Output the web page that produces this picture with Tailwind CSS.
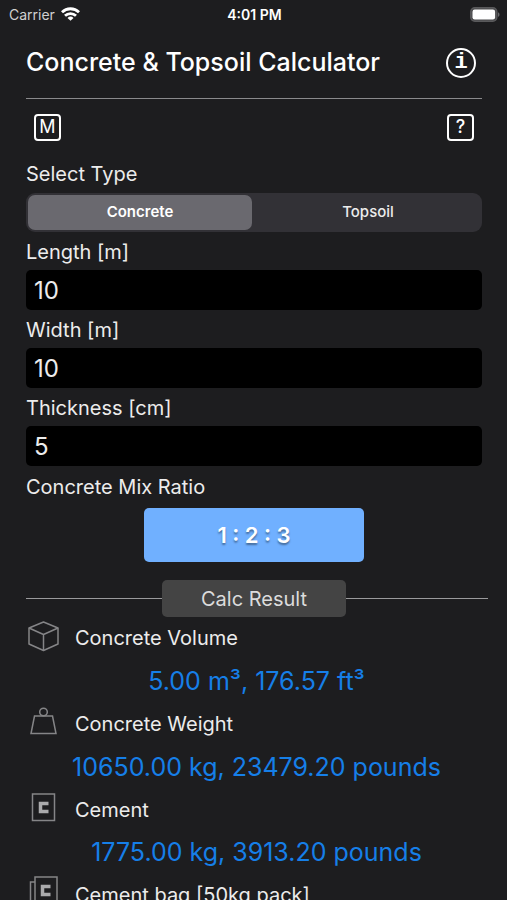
<!DOCTYPE html>
<html lang="en">
<head>
    <meta charset="UTF-8">
    <meta name="viewport" content="width=device-width, initial-scale=1.0">
    <title>Concrete &amp; Topsoil Calculator</title>
    <script src="https://cdn.jsdelivr.net/npm/@tailwindcss/browser@4"></script>
</head>
<body class="h-screen flex flex-col bg-[#1d1d1f] text-[#ececec] font-['Inter','Liberation_Sans',sans-serif]">
    <!-- Status bar -->
    <div class="grid grid-cols-3 items-center h-7 shrink-0 pl-[9px] pr-[7px] text-[14px]">
        <div class="flex items-center gap-[6px]">
            <span class="text-[#d0d0d0]">Carrier</span>
            <svg class="w-[19px] h-[14px]" viewBox="0 0 19 14" fill="none" stroke="#fff" stroke-width="2.8" aria-hidden="true">
                <path d="M1 5.200a12.200 12.200 0 0 1 17 0"/>
                <path d="M4 8.800a7.900 7.900 0 0 1 11 0"/>
                <path d="M9.500 13.800l-3-2.800a4.300 4.300 0 0 1 6 0z" fill="#fff" stroke="none"/>
            </svg>
        </div>
        <div class="text-center font-semibold text-white">4:01 PM</div>
        <svg class="justify-self-end w-[30px] h-[15px]" viewBox="0 0 30 15" aria-hidden="true">
            <rect x=".8" y=".8" width="26" height="13.400" rx="4" fill="#4a4a4c" stroke="#59595b" stroke-width="1.500"/>
            <rect x="2.500" y="2.500" width="22.600" height="10" rx="2.200" fill="#fff"/>
            <path d="M28 5.200c2 .8 2 3.800 0 4.600z" fill="#69696b"/>
        </svg>
    </div>

    <main class="flex-1 min-h-0 overflow-y-auto [scrollbar-width:none] pl-[26px] pr-[25px]">
        <header class="flex items-center justify-between h-[70px] pr-[6px]">
            <h1 class="text-[25px] font-medium text-white whitespace-nowrap">Concrete &amp; Topsoil Calculator</h1>
            <button type="button" aria-label="Info" class="flex items-center justify-center size-[30px] rounded-full border-2 border-white text-white font-['Liberation_Mono',monospace] text-[22px] leading-none font-bold">i</button>
        </header>
        <hr class="border-[#8a8a8c]">

        <div class="flex items-center justify-between h-14 px-2">
            <button type="button" aria-label="Metric units" class="flex items-center justify-center size-[27px] rounded border-2 border-white text-white text-lg leading-none">M</button>
            <button type="button" aria-label="Help" class="flex items-center justify-center size-[27px] rounded border-2 border-white text-white text-lg leading-none font-medium">?</button>
        </div>

        <form>
            <fieldset>
                <legend class="flex items-center h-[38px] text-xl">Select Type</legend>
                <div class="grid grid-cols-2 gap-1 h-[39px] p-[2px] rounded-[9px] bg-[#323136] text-[15px] font-medium">
                    <label class="flex items-center justify-center rounded-[7px] has-checked:bg-[#6a696f] has-checked:font-semibold has-checked:text-white">
                        <input type="radio" name="type" value="concrete" class="sr-only" checked>Concrete
                    </label>
                    <label class="flex items-center justify-center rounded-[7px] has-checked:bg-[#6a696f] has-checked:font-semibold has-checked:text-white">
                        <input type="radio" name="type" value="topsoil" class="sr-only">Topsoil
                    </label>
                </div>
            </fieldset>

            <label for="length" class="flex items-center h-[38px] pt-[2px] text-xl">Length [m]</label>
            <input id="length" type="text" inputmode="decimal" value="10" class="block w-full h-10 px-2 rounded-[5px] bg-black text-2xl">
            <label for="width" class="flex items-center h-[38px] pt-[2px] text-xl">Width [m]</label>
            <input id="width" type="text" inputmode="decimal" value="10" class="block w-full h-10 px-2 rounded-[5px] bg-black text-2xl">
            <label for="thickness" class="flex items-center h-[38px] pt-[2px] text-xl">Thickness [cm]</label>
            <input id="thickness" type="text" inputmode="decimal" value="5" class="block w-full h-10 px-2 rounded-[5px] bg-black text-2xl">

            <label for="ratio" class="flex items-center h-[42px] text-xl">Concrete Mix Ratio</label>
            <button id="ratio" type="button" class="block mx-auto w-[220px] h-[54px] rounded-[5px] bg-[#70b0ff] text-[22px] font-semibold text-white text-shadow-[0_2px_2px_rgb(0_0_0/0.4)]">1 : 2 : 3</button>
        </form>

        <!-- Results -->
        <div class="grid grid-cols-[1fr_184px_1fr] items-center mt-[18px]">
            <div class="h-px bg-[#9a9a9c]"></div>
            <h2 class="flex items-center justify-center h-[37px] rounded-[5px] bg-[#444] text-xl text-[#dcdcdc]">Calc Result</h2>
            <div class="h-px -mr-[6px] bg-[#9a9a9c]"></div>
        </div>

        <dl class="text-xl">
            <dt class="flex items-center gap-[14px] h-[42px]">
                <svg class="size-[35px] shrink-0" viewBox="0 0 35 35" fill="none" stroke="#858587" stroke-width="1.500" stroke-linejoin="round" aria-hidden="true">
                    <path d="M17.500 1l14.500 6v16l-14.500 6.500L3 23V7z"/>
                    <path d="M3 7l14.500 6.500L32 7M17.500 13.500v16"/>
                </svg>
                Concrete Volume
            </dt>
            <dd class="flex items-center justify-center h-11 pl-[5px] text-[25px] text-[#167fe8] whitespace-nowrap">5.00 m³, 176.57 ft³</dd>

            <dt class="flex items-center gap-[14px] h-[42px]">
                <svg class="size-[35px] shrink-0" viewBox="0 0 35 35" fill="none" stroke="#858587" stroke-width="1.500" aria-hidden="true">
                    <circle cx="17.500" cy="5" r="3.800"/>
                    <path d="M8.500 9h18l3.500 17.500H5z"/>
                </svg>
                Concrete Weight
            </dt>
            <dd class="flex items-center justify-center h-11 pl-[5px] text-[25px] text-[#167fe8] whitespace-nowrap">10650.00 kg, 23479.20 pounds</dd>

            <dt class="flex items-center gap-[14px] h-[42px]">
                <svg class="size-[35px] shrink-0" viewBox="0 0 35 35" fill="none" stroke="#858587" stroke-width="1.500" aria-hidden="true">
                    <path d="M6.500 1h22v26.500h-22z"/>
                    <path d="M22.500 10.500h-8v8h8" stroke="#aaaaac" stroke-width="3.500"/>
                </svg>
                Cement
            </dt>
            <dd class="flex items-center justify-center h-[43px] pl-[5px] text-[25px] text-[#167fe8] whitespace-nowrap">1775.00 kg, 3913.20 pounds</dd>

            <dt class="flex items-center gap-[14px] h-[42px]">
                <svg class="size-[35px] shrink-0 overflow-visible" viewBox="0 0 35 35" fill="none" stroke="#858587" stroke-width="1.500" aria-hidden="true">
                    <path d="M9 -1h22v26.500H9z"/>
                    <path d="M9 4H4.500v26.500H26v-5"/>
                    <path d="M24.500 8.500h-8v8h8" stroke="#aaaaac" stroke-width="3.500"/>
                </svg>
                Cement bag [50kg pack]
            </dt>
        </dl>
    </main>
</body>
</html>
